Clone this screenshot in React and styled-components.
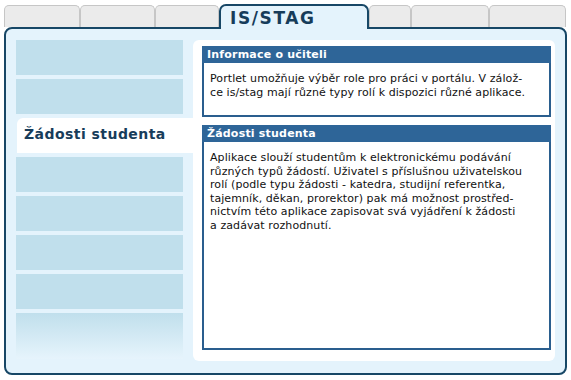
import React from "react";
import styled, { createGlobalStyle } from "styled-components";

const GlobalStyle = createGlobalStyle`
	body {
		margin: 0;
		background: #ffffff;
		font-family: "DejaVu Sans", Verdana, sans-serif;
	}
`;

const Page = styled.div`
	width: 571px;
	height: 380px;
	padding: 4px 4px 0;
	box-sizing: border-box;
`;

const TabRow = styled.div`
	display: flex;
	align-items: flex-end;
	height: 23px;
`;

const Tab = styled.div`
	width: ${({ $w }) => $w}px;
	height: 22px;
	box-sizing: border-box;
	background: #ebebeb;
	border: 1px solid #c6c6c6;
	border-bottom: none;
	border-radius: 5px 5px 0 0;
`;

const ActiveTab = styled.div`
	position: relative;
	z-index: 2;
	width: ${({ $w }) => $w}px;
	height: 25px;
	margin-bottom: -2px;
	box-sizing: border-box;
	background: #e4f3fc;
	border: 2px solid #174766;
	border-bottom: none;
	border-radius: 7px 7px 0 0;
	padding: 2px 0 0 9px;
	font-size: 17px;
	font-weight: bold;
	color: #163c5a;
	letter-spacing: 1.6px;
`;

const Panel = styled.div`
	height: 348px;
	box-sizing: border-box;
	display: flex;
	background: #e4f3fc;
	border: 2px solid #174766;
	border-radius: 8px;
	padding: 11px 10px 12px 10px;
`;

const Menu = styled.div`
	width: 167px;
	display: flex;
	flex-direction: column;
	gap: 4px;
`;

const MenuItem = styled.div`
	height: ${({ $h }) => $h || 35}px;
	background: ${({ $fade }) =>
		$fade ? "linear-gradient(#c0dfec, #e6f4fc)" : "#c0dfec"};
`;

const ActiveItem = styled.div`
	height: 35px;
	margin: 0 -10px 0 1px;
	background: #ffffff;
	border-radius: 6px 0 0 0;
	padding: 8px 0 0 7px;
	box-sizing: border-box;
	font-size: 14px;
	font-weight: bold;
	color: #173c5a;
	letter-spacing: 0.45px;
`;

const Content = styled.div`
	flex: 1;
	margin-left: 10px;
	display: flex;
	flex-direction: column;
	gap: 8px;
	background: #ffffff;
	border-radius: 6px;
	padding: 6px 4px 11px 9px;
`;

const Portlet = styled.div`
	display: flex;
	flex-direction: column;
	height: ${({ $h }) => ($h ? `${$h}px` : "auto")};
	flex: ${({ $grow }) => ($grow ? 1 : "none")};
`;

const PortletHead = styled.div`
	height: 17px;
	background: #2e6598;
	color: #ffffff;
	font-size: 11px;
	font-weight: bold;
	line-height: 17px;
	padding-left: 5px;
	letter-spacing: 0.2px;
`;

const PortletBody = styled.div`
	flex: 1;
	border: 2px solid #2a5e8e;
	border-top: none;
	padding: 9px 6px 0;
	font-size: 11px;
	line-height: 13.6px;
	letter-spacing: 0.08px;
	color: #111111;
`;

const App = () => {
	return (
		<Page>
			<GlobalStyle />
			<TabRow>
				<Tab $w={76} />
				<Tab $w={75} />
				<Tab $w={64} />
				<ActiveTab $w={150}>IS/STAG</ActiveTab>
				<Tab $w={42} />
				<Tab $w={78} />
				<Tab $w={77} />
			</TabRow>
			<Panel>
				<Menu>
					<MenuItem />
					<MenuItem />
					<ActiveItem>Žádosti studenta</ActiveItem>
					<MenuItem />
					<MenuItem />
					<MenuItem />
					<MenuItem />
					<MenuItem $h={46} $fade />
				</Menu>
				<Content>
					<Portlet $h={71}>
						<PortletHead>Informace o učiteli</PortletHead>
						<PortletBody>
							Portlet umožňuje výběr role pro práci v portálu. V zálož-
							<br />
							ce is/stag mají různé typy rolí k dispozici různé aplikace.
						</PortletBody>
					</Portlet>
					<Portlet $grow>
						<PortletHead>Žádosti studenta</PortletHead>
						<PortletBody>
							Aplikace slouží studentům k elektronickému podávání
							<br />
							různých typů žádostí. Uživatel s příslušnou uživatelskou
							<br />
							rolí (podle typu žádosti - katedra, studijní referentka,
							<br />
							tajemník, děkan, prorektor) pak má možnost prostřed-
							<br />
							nictvím této aplikace zapisovat svá vyjádření k žádosti
							<br />a zadávat rozhodnutí.
						</PortletBody>
					</Portlet>
				</Content>
			</Panel>
		</Page>
	);
};

export default App;
